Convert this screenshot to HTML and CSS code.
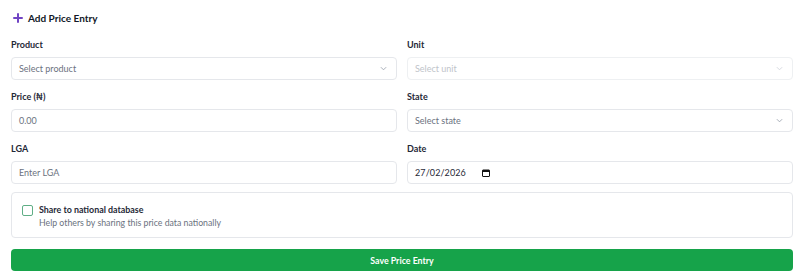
FILE: index.html
```html
<!DOCTYPE html>
<html>
<head>
<meta charset="utf-8">
<link rel="stylesheet" href="styles.css">
</head>
<body>
<div class="page">
  <h2 class="title">
    <svg class="plus" viewBox="0 0 10 10" width="10" height="10"><path d="M5 1v8M1 5h8" stroke="#7044c4" stroke-width="2" stroke-linecap="round"/></svg>
    <span>Add Price Entry</span>
  </h2>
  <div class="grid">
    <div class="field">
      <label class="label">Product</label>
      <div class="input select"><span class="ph">Select product</span>
        <svg class="chev" viewBox="0 0 8 5" width="7" height="5"><path d="M1 1l3 3 3-3" fill="none" stroke="#9ca3af" stroke-width="1"/></svg></div>
    </div>
    <div class="field">
      <label class="label">Unit</label>
      <div class="input select disabled"><span class="ph light">Select unit</span>
        <svg class="chev" viewBox="0 0 8 5" width="7" height="5"><path d="M1 1l3 3 3-3" fill="none" stroke="#d1d5db" stroke-width="1"/></svg></div>
    </div>
    <div class="field">
      <label class="label">Price (₦)</label>
      <div class="input"><span class="ph">0.00</span></div>
    </div>
    <div class="field">
      <label class="label">State</label>
      <div class="input select"><span class="ph">Select state</span>
        <svg class="chev" viewBox="0 0 8 5" width="7" height="5"><path d="M1 1l3 3 3-3" fill="none" stroke="#9ca3af" stroke-width="1"/></svg></div>
    </div>
    <div class="field">
      <label class="label">LGA</label>
      <div class="input"><span class="ph">Enter LGA</span></div>
    </div>
    <div class="field">
      <label class="label">Date</label>
      <div class="input date"><span class="val">27/02/2026</span>
        <svg class="cal" viewBox="0 0 8 8" width="8" height="8"><rect x="0.5" y="1" width="7" height="6.5" rx="0.5" fill="none" stroke="#111" stroke-width="1"/><rect x="0.5" y="1" width="7" height="2" fill="#111"/></svg></div>
    </div>
  </div>
  <div class="card">
    <span class="check"></span>
    <div class="card-text">
      <div class="card-title">Share to national database</div>
      <div class="card-sub">Help others by sharing this price data nationally</div>
    </div>
  </div>
  <button class="save">Save Price Entry</button>
</div>
</body>
</html>
```

FILE: styles.css
```css
* { box-sizing: border-box; }
html, body { margin: 0; padding: 0; background: #fff; }
body { font-family: "Lato", "Noto Sans", sans-serif; color: #1f2937; }
.page { padding: 9px 13px 0 11px; }
.title { margin: 0; display: flex; align-items: center; gap: 5px; font-size: 10px; font-weight: 700; height: 18px; padding-left: 2px; color: #111827; }
.plus { display: block; }
.grid { display: grid; grid-template-columns: 1fr 1fr; column-gap: 10px; row-gap: 11px; margin-top: 12px; }
.field { display: flex; flex-direction: column; }
.label { font-size: 9px; font-weight: 700; line-height: 12px; height: 12px; margin-bottom: 6px; color: #1f2937; }
.input { height: 23px; border: 1px solid #e5e7eb; border-radius: 4px; display: flex; align-items: center; padding: 0 7px; font-size: 9px; background: #fff; }
.select { justify-content: space-between; padding-right: 9px; }
.disabled { background: #fff; border-color: #eef0f2; }
.ph { color: #6b7280; }
.ph.light { color: #c0c4ca; }
.chev { display: block; }
.date { gap: 16px; }
.val { color: #1f2937; letter-spacing: 0.1px; }
.cal { display: block; }
.card { margin-top: 8px; height: 46px; border: 1px solid #e5e7eb; border-radius: 4px; display: flex; align-items: flex-start; padding: 11px 10px; gap: 6px; }
.check { width: 11px; height: 11px; border: 1px solid #5fae86; border-radius: 2px; margin-top: 1px; flex: none; }
.card-title { font-size: 8.9px; font-weight: 700; line-height: 12px; color: #1f2937; }
.card-sub { font-size: 8.75px; line-height: 13px; color: #6b7280; }
.save { display: block; width: 100%; margin-top: 11px; height: 22px; border: 0; border-radius: 4px; background: #16a34a; color: #fff; font-family: inherit; font-size: 8.8px; font-weight: 700; }
```
